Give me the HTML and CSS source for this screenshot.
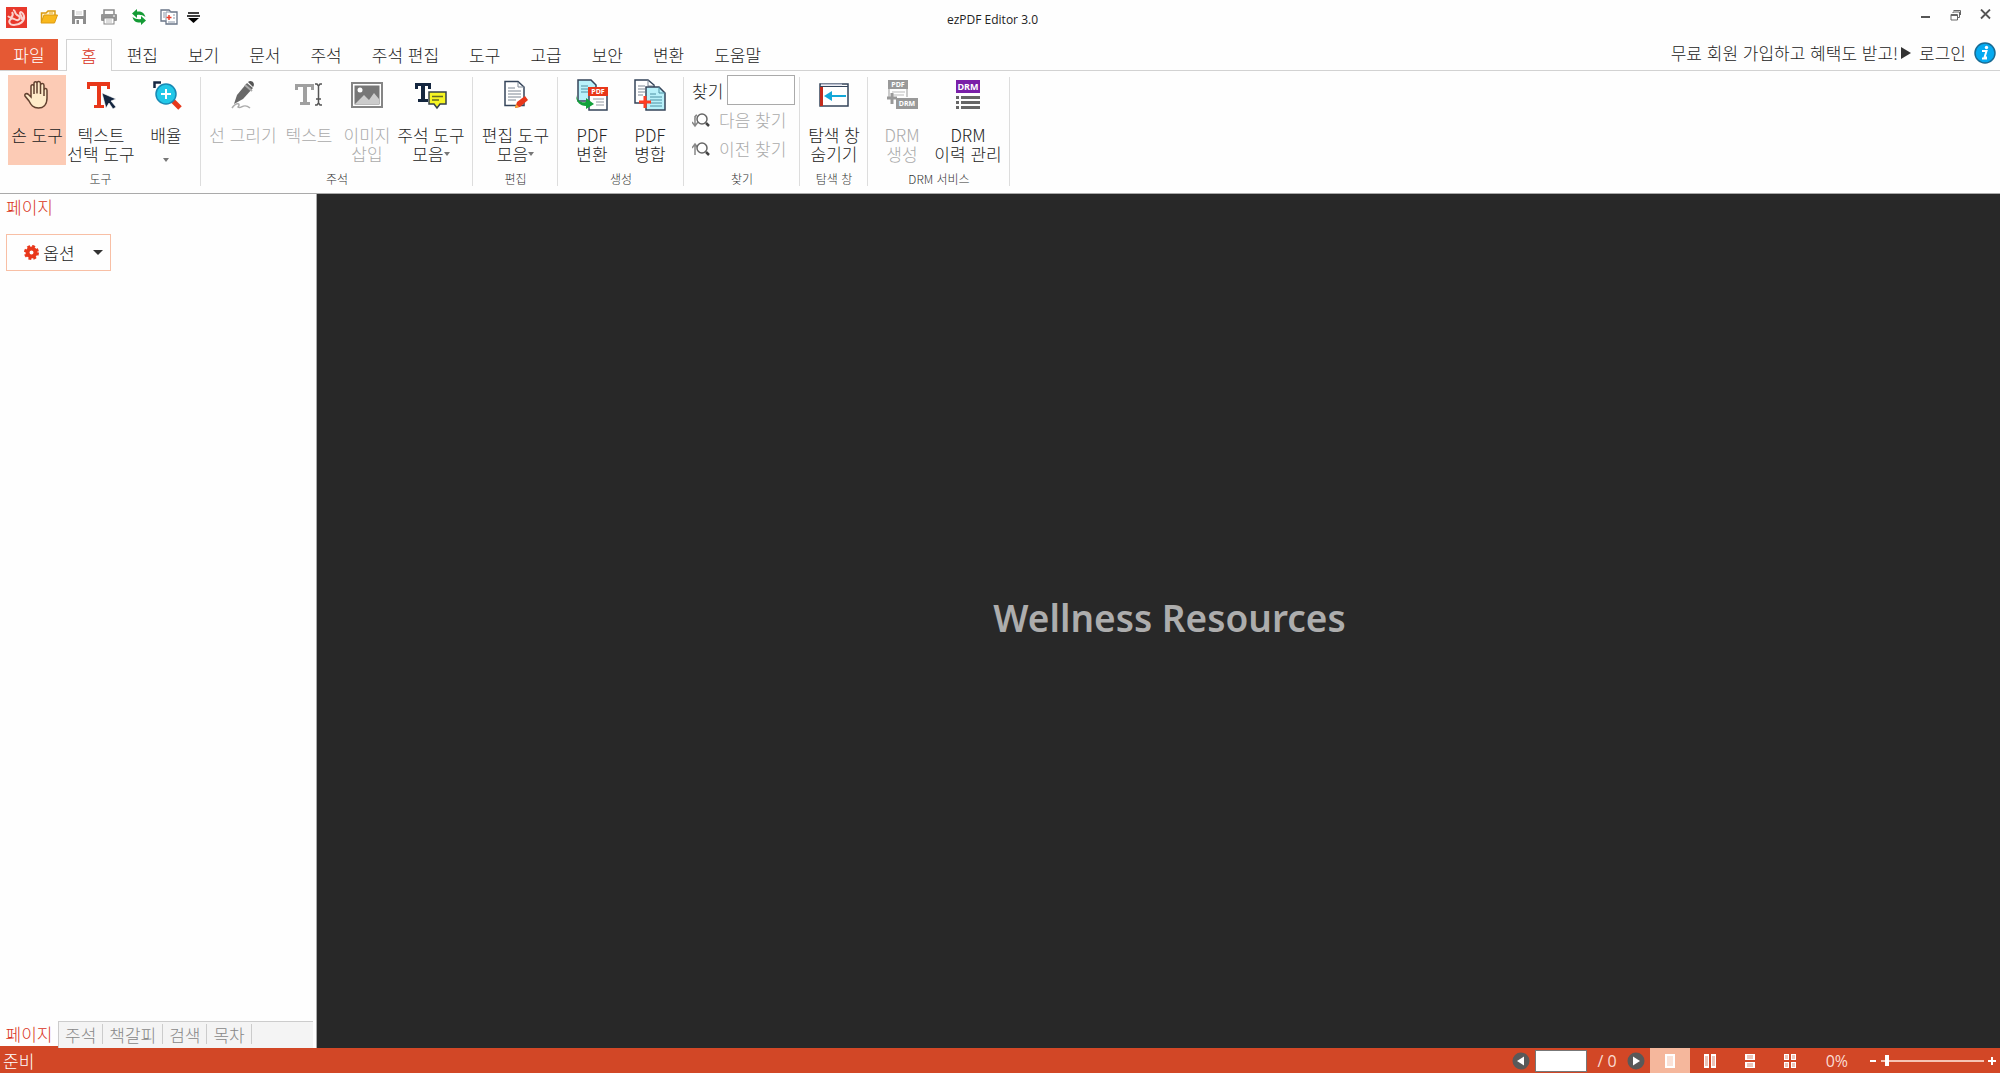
FILE: index.html
```html
<!DOCTYPE html>
<html lang="ko">
<head>
<meta charset="utf-8">
<title>ezPDF Editor 3.0</title>
<link rel="stylesheet" href="styles.css">
</head>
<body>
<div class="app">
  <header class="titlebar">
    <div class="quick">
      <svg class="logo" width="21" height="21" viewBox="0 0 21 21"><rect width="21" height="21" fill="#e8382b"/><path d="M7 3C10 3 8 6 11 8C14 9 15 12 12 13C9 14 8 10 5 12C2 14 3 18 8 18C14 18 19 14 18 9C17 5 14 4 14 6C14 9 17 9 16 13M2 9C5 13 8 8 6 5" fill="none" stroke="#fbd3cf" stroke-width="2"/></svg>
      <button aria-label="열기"><svg width="18" height="16" viewBox="0 0 18 16"><path d="M1.500 13V4H6L8 2H15V6" fill="#fff3cf" stroke="#d99a12" stroke-width="1.500"/><path d="M1 14L4 6H17.500L14.500 14Z" fill="#f9b81d" stroke="#dc9a10"/><path d="M9 4H13" stroke="#e6a51c"/></svg></button>
      <button aria-label="저장"><svg width="16" height="16" viewBox="0 0 16 16"><path d="M1 1H15V15H1Z" fill="#8d8d8d"/><path d="M3.500 1H12.500V7H3.500ZM4 10H12V15H4Z" fill="#fff"/><path d="M5 3H11M5 5H11" stroke="#ccc"/><path d="M5.500 11H8V15H5.500Z" fill="#8d8d8d"/></svg></button>
      <button aria-label="인쇄"><svg width="18" height="16" viewBox="0 0 18 16"><path d="M4 5V1H14V5" fill="#fff" stroke="#8a8a8a" stroke-width="1.500"/><rect x="1" y="5" width="16" height="7" rx="1" fill="#969696"/><rect x="4" y="9" width="10" height="6" fill="#fff" stroke="#858585"/><path d="M6 11H12M6 13H12" stroke="#bbb"/><path d="M13 7H15" stroke="#fff"/></svg></button>
      <button aria-label="새로 고침"><svg width="16" height="16" viewBox="0 0 16 16"><path d="M1 4.500L6 0V2.500C10 2 13 3 14.500 8C11.500 6 9 5.500 6 6V9Z" fill="#149b35"/><path d="M15 11.500L10 16V13.500C6 14 3 13 1.500 8C4.500 10 7 10.500 10 10V7Z" fill="#149b35"/></svg></button>
      <button aria-label="병합"><svg width="18" height="16" viewBox="0 0 18 16"><path d="M1 1H9L11 3H17V15H6V12H1Z" fill="#fff" stroke="#687487" stroke-width="1.300"/><path d="M6 12V3H11M3 4H5M3 6H5M3 8H5M13 6H15M13 9H15M8 13H15" fill="none" stroke="#8b97a8"/><path d="M9 6V11M6.500 8.500H11.500" stroke="#e9402e" stroke-width="1.500"/></svg></button>
      <button class="more" aria-label="빠른 실행 사용자 지정"><svg width="13" height="11" viewBox="0 0 13 11"><path d="M1 1H12M0 4H13" stroke="#000" stroke-width="1.500"/><path d="M1 6H12L6.500 11Z"/></svg></button>
    </div>
    <div class="title">ezPDF Editor 3.0</div>
    <div class="window-buttons">
      <button aria-label="최소화"><svg width="11" height="12" viewBox="0 0 11 12"><path d="M1 8H10" stroke="#555" stroke-width="2"/></svg></button>
      <button aria-label="이전 크기로"><svg width="11" height="12" viewBox="0 0 11 12"><path d="M1 5.500H7.500V11H1ZM1 6.500H7.500M3 4V3H9.500V8.500H8M3.500 1.500H10.500V6" fill="none" stroke="#666"/></svg></button>
      <button aria-label="닫기"><svg width="11" height="12" viewBox="0 0 11 12"><path d="M1 0.500L10 9.500M10 0.500L1 9.500" stroke="#555" stroke-width="1.800"/></svg></button>
    </div>
  </header>

  <nav class="tabs">
    <button class="file">파일</button>
    <button class="active">홈</button>
    <button>편집</button><button>보기</button><button>문서</button><button>주석</button><button>주석 편집</button><button>도구</button><button>고급</button><button>보안</button><button>변환</button><button>도움말</button>
    <div class="account">
      <a href="#">무료 회원 가입하고 혜택도 받고!<svg width="11" height="12" viewBox="0 0 11 12"><path d="M1 0L11 6L1 12Z" fill="#333"/></svg></a>
      <a href="#">로그인</a>
      <button aria-label="정보"><svg width="22" height="22" viewBox="0 0 22 22"><circle cx="11" cy="11" r="10" fill="#05aaf0" stroke="#176b94" stroke-width="1.500"/><circle cx="12.500" cy="5.500" r="1.700" fill="#fff"/><path d="M8 9H12.500L10.500 15.500H13M8 16.500H13" fill="none" stroke="#fff" stroke-width="2"/></svg></button>
    </div>
  </nav>

  <div class="ribbon">
    <section class="group tools">
      <div class="items">
        <button class="tool w58 on"><svg width="32" height="32" viewBox="0 0 32 32"><path d="M10 18V7.500C10 5 13 5 13 7.500V15V4.500C13 2 16 2 16 4.500V14.500V4C16 2 19.500 2 19.500 4.500V15V6C20 4 23 4 23 6.500V17V11C23.500 9 26 9 26 11.500V19C26 26 22 29 17.500 29C12 29 10 26 8 22L4 17C3 14.500 6 14 7.500 15.500Z" fill="#ffebc9" stroke="#62402f" stroke-width="1.500"/></svg><span>손 도구</span></button>
        <button class="tool w70"><svg width="32" height="32" viewBox="0 0 32 32"><path d="M2 3H25V10H22V7H16V26H19V29H9V26H12V7H5V10H2Z" fill="#e8371a"/><path d="M17 14L31 20L26 22L31 28L28 30L24 24L21 29Z" fill="#14263f" stroke="#fff" stroke-width=".6"/></svg><span>텍스트<br>선택 도구</span></button>
        <button class="tool w60"><svg width="32" height="32" viewBox="0 0 32 32"><path d="M4.500 9V3.500H11" fill="none" stroke="#162842" stroke-width="2.500"/><path d="M23 22L30 29" stroke="#e6381c" stroke-width="5"/><circle cx="16" cy="15" r="10" fill="#20c8e8" stroke="#1789b4" stroke-width="1.500"/><path d="M16 10V20M11 15H21" stroke="#fff" stroke-width="2"/></svg><span>배율</span><i class="caret"></i></button>
      </div>
      <h2>도구</h2>
    </section>
    <section class="group notes">
      <div class="items">
        <button class="tool w68" disabled><svg width="32" height="32" viewBox="0 0 32 32"><path d="M7 25L10 16L20 4L26 9L16 20Z" fill="#686868"/><path d="M18 6L25 12" stroke="#aaa" stroke-width="2"/><path d="M21 3C24 0 29 4 26 8Z" fill="#555"/><path d="M5 29C10 22 14 25 11 28C14 31 16 23 23 29" fill="none" stroke="#aaa" stroke-width="1.500"/></svg><span>선 그리기</span></button>
        <button class="tool w64" disabled><svg width="32" height="32" viewBox="0 0 32 32"><path d="M2 5H21V11H18V8H14V23H17V26H7V23H10V8H5V11H2Z" fill="#a0a0a0"/><path d="M22 5H24L25.500 7L27 5H29M25.500 7V24M22 26H24L25.500 24L27 26H29M23 20H28" fill="none" stroke="#555" stroke-width="1.500"/></svg><span>텍스트</span></button>
        <button class="tool w52" disabled><svg width="32" height="32" viewBox="0 0 32 32"><rect x="1" y="4" width="30" height="24" fill="#fff" stroke="#858585" stroke-width="2"/><rect x="3.500" y="6.500" width="25" height="19" fill="#777"/><circle cx="9" cy="11" r="2.500" fill="#fff"/><path d="M4 25L13 16L18 21L23 14L28 20V25Z" fill="#ccc"/></svg><span>이미지<br>삽입</span></button>
        <button class="tool w76"><svg width="32" height="32" viewBox="0 0 32 32"><path d="M0 4H16V10H13V7H10V20H13V23H3V20H6V7H3V10H0Z" fill="#14263f"/><path d="M14 13H31V25H25L22 29L19 25H14Z" fill="#f6f523" stroke="#34404a" stroke-width="1.500"/><path d="M17 17.500H28M17 21H24" stroke="#666b22" stroke-width="1.500"/></svg><span>주석 도구<br>모음<i class="caret"></i></span></button>
      </div>
      <h2>주석</h2>
    </section>
    <section class="group edit">
      <div class="items">
        <button class="tool w76"><svg width="32" height="32" viewBox="0 0 32 32"><path d="M5 2.500H18L24 8V26.500H5Z" fill="#fff" stroke="#34445a" stroke-width="1.500"/><path d="M18 3V8H24M8 9H15M8 12H21M8 15H21M8 18H21M8 21H16" fill="none" stroke="#7d8794"/><path d="M15 29L17 23L25 17L28 21L20 28Z" fill="#e8371a"/><path d="M15 29L16 25L19 28Z" fill="#f6ac36"/></svg><span>편집 도구<br>모음<i class="caret"></i></span></button>
      </div>
      <h2>편집</h2>
    </section>
    <section class="group create">
      <div class="items">
        <button class="tool w58"><svg width="32" height="32" viewBox="0 0 32 32"><path d="M2 1H15L20 6V22H2Z" fill="#b9f1fa" stroke="#34445a" stroke-width="1.500"/><path d="M5 7H12M5 10H12M5 13H12" stroke="#4f91a4"/><path d="M13 17V31H31V16" fill="#fff" stroke="#34445a" stroke-width="1.500"/><path d="M17 20H28M20 23H28M20 26H28" stroke="#9299a2"/><rect x="12" y="8" width="20" height="9" fill="#e8371a"/><text x="22" y="15" class="icon-text">PDF</text><path d="M0 16C1 22 5 24 10 23V19L18 25L10 30V27C4 27 0 23 0 16Z" fill="#12a13b"/></svg><span>PDF<br>변환</span></button>
        <button class="tool w58"><svg width="32" height="32" viewBox="0 0 32 32"><path d="M1 1H14L20 6V24H1Z" fill="#fff" stroke="#34445a" stroke-width="1.500"/><path d="M14 1V7H20M4 7H11M4 10H11M4 13H11M4 16H9" fill="none" stroke="#7d8794"/><path d="M12 8H25L31 14V31H12Z" fill="#b9f1fa" stroke="#34445a" stroke-width="1.500"/><path d="M25 8V14H31M16 15H22M16 18H28M16 21H28M16 24H28M16 27H28" fill="none" stroke="#4f91a4"/><path d="M11 17V29M5 23H17" stroke="#ff3d23" stroke-width="3"/></svg><span>PDF<br>병합</span></button>
      </div>
      <h2>생성</h2>
    </section>
    <section class="group find">
      <div class="items">
        <label class="find-row"><span>찾기</span><input type="text"></label>
        <button class="find-btn" disabled><svg width="18" height="16" viewBox="0 0 18 16"><path d="M3 4V14M0 10L3 14L6 10M5 3C2 4 3 7 3 9" fill="none" stroke="#888" stroke-width="1.500"/><circle cx="10" cy="7" r="5" fill="#fff" stroke="#666" stroke-width="1.500"/><path d="M14 11L17 14" stroke="#444" stroke-width="2.500"/></svg>다음 찾기</button>
        <button class="find-btn" disabled><svg width="18" height="16" viewBox="0 0 18 16"><path d="M3 14V3M0 7L3 3L6 7" fill="none" stroke="#888" stroke-width="1.500"/><circle cx="10" cy="7" r="5" fill="#fff" stroke="#666" stroke-width="1.500"/><path d="M14 11L17 14" stroke="#444" stroke-width="2.500"/></svg>이전 찾기</button>
      </div>
      <h2>찾기</h2>
    </section>
    <section class="group nav">
      <div class="items">
        <button class="tool w58"><svg width="32" height="32" viewBox="0 0 32 32"><rect x="2" y="5" width="28" height="22" fill="#fff" stroke="#34445a" stroke-width="1.500"/><path d="M2 7.500H30" stroke="#34445a"/><path d="M3 5.500H24" stroke="#b9bfd0" stroke-width="1.500"/><rect x="2" y="8" width="3" height="19" fill="#c32a1c"/><path d="M11 17H28" stroke="#12a7d8" stroke-width="2"/><path d="M6 17L14 12V22Z" fill="#12a7d8"/></svg><span>탐색 창<br>숨기기</span></button>
      </div>
      <h2>탐색 창</h2>
    </section>
    <section class="group drm">
      <div class="items">
        <button class="tool w66" disabled><svg width="32" height="32" viewBox="0 0 32 32"><path d="M3 9V18M21 9V18" stroke="#999"/><path d="M6 13H19M6 16H18" stroke="#bbb"/><rect x="2" y="1" width="20" height="9" fill="#999"/><text x="12" y="8" class="icon-text">PDF</text><path d="M6 14V25M1 19H11" stroke="#999" stroke-width="3"/><rect x="10" y="19" width="22" height="11" fill="#999"/><text x="21" y="27" class="icon-text">DRM</text></svg><span>DRM<br>생성</span></button>
        <button class="tool w66"><svg width="32" height="32" viewBox="0 0 32 32"><rect x="4" y="1" width="24" height="13" fill="#7a1fa8"/><text x="16" y="11" class="icon-text big">DRM</text><path d="M4 18.500H7M9 18.500H28M4 23.500H7M9 23.500H28M4 28.500H7M9 28.500H28" stroke="#666" stroke-width="3"/></svg><span>DRM<br>이력 관리</span></button>
      </div>
      <h2>DRM 서비스</h2>
    </section>
  </div>

  <div class="workspace">
    <aside class="sidebar">
      <h1>페이지</h1>
      <button class="options"><svg width="15" height="15" viewBox="0 0 15 15"><circle cx="7.500" cy="7.500" r="6" fill="none" stroke="#e8371a" stroke-width="3" stroke-dasharray="2.700 2"/><circle cx="7.500" cy="7.500" r="4" fill="none" stroke="#e8371a" stroke-width="4"/></svg>옵션<i class="caret"></i></button>
      <div class="panel-tabs">
        <button class="current">페이지</button>
        <div class="others"><button>주석</button><button>책갈피</button><button>검색</button><button>목차</button></div>
      </div>
    </aside>
    <main class="canvas"><p>Wellness Resources</p></main>
  </div>

  <footer class="status">
    <span class="ready">준비</span>
    <button aria-label="이전 페이지"><svg width="18" height="18" viewBox="0 0 18 18"><circle cx="9" cy="9" r="8.500" fill="#595959"/><path d="M12 4.500V13.500L5 9Z" fill="#fff"/></svg></button>
    <input class="page" type="text" aria-label="페이지 번호">
    <span class="total">/ 0</span>
    <button aria-label="다음 페이지"><svg width="18" height="18" viewBox="0 0 18 18"><circle cx="9" cy="9" r="8.500" fill="#595959"/><path d="M6 4.500V13.500L13 9Z" fill="#fff"/></svg></button>
    <div class="views">
      <button class="on" aria-label="한 페이지"><svg width="12" height="14" viewBox="0 0 12 14"><path d="M1 0H11V14H1Z" fill="#fff"/><path d="M3 3H9M3 5H9M3 7H9M3 9H9M3 11H9" stroke="#f5c5b0"/></svg></button>
      <button aria-label="두 페이지"><svg width="12" height="14" viewBox="0 0 12 14"><path d="M0 0H5V14H0ZM7 0H12V14H7Z" fill="#fff"/><path d="M1 3H4M1 5H4M1 7H4M1 9H4M1 11H4M8 3H11M8 5H11M8 7H11M8 9H11M8 11H11" stroke="#d98870"/></svg></button>
      <button aria-label="연속"><svg width="12" height="14" viewBox="0 0 12 14"><path d="M1 0H11V6H1ZM1 8H11V14H1Z" fill="#fff"/><path d="M3 2H9M3 4H9M3 10H9M3 12H9" stroke="#d98870"/></svg></button>
      <button aria-label="연속 두 페이지"><svg width="12" height="14" viewBox="0 0 12 14"><path d="M0 0H5V6H0ZM7 0H12V6H7ZM0 8H5V14H0ZM7 8H12V14H7Z" fill="#fff"/><path d="M1 2H4M1 4H4M8 2H11M8 4H11M1 10H4M1 12H4M8 10H11M8 12H11" stroke="#d98870"/></svg></button>
    </div>
    <span class="percent">0%</span>
    <button aria-label="축소"><svg width="8" height="8" viewBox="0 0 8 8"><path d="M1 4H7" stroke="#fff" stroke-width="2"/></svg></button>
    <input class="zoom" type="range" min="0" max="100" value="4" aria-label="배율">
    <button aria-label="확대"><svg width="8" height="8" viewBox="0 0 8 8"><path d="M0 4H8M4 0V8" stroke="#fff" stroke-width="2"/></svg></button>
  </footer>
</div>
</body>
</html>
```
FILE: styles.css
```css
* { box-sizing: border-box; }
body {
  margin: 0;
  font: 300 17px/19px "Noto Sans CJK KR", "Noto Sans", sans-serif;
  color: #222;
  background: #fefefe;
}
button {
  display: flex;
  align-items: center;
  justify-content: center;
  margin: 0;
  padding: 0;
  border: 0;
  background: none;
  color: inherit;
  font: inherit;
  white-space: nowrap;
}
input { margin: 0; padding: 0 4px; font: inherit; }
svg { display: block; flex: none; }
h1, h2, p { margin: 0; font-weight: inherit; }
a { color: inherit; text-decoration: none; }

.app { display: flex; flex-direction: column; min-height: 100vh; }

/* Title bar */
.titlebar {
  display: grid;
  grid-template-columns: 1fr auto 1fr;
  height: 38px;
  padding: 0 9px 0 6px;
}
.quick { display: flex; align-items: center; gap: 13px; height: 34px; }
.more { margin-left: -4px; }
.title { padding-top: 1px; font: 400 12px/38px "Open Sans", sans-serif; margin-right: 12px; }
.window-buttons { display: flex; justify-content: flex-end; align-items: center; gap: 19px; height: 30px; }

/* Ribbon tabs */
.tabs { display: flex; align-items: stretch; height: 33px; border-bottom: 1px solid #d2d2d2; }
.tabs > button { padding: 0 15px; margin-top: 1px; }
.tabs > .file { width: 58px; margin-right: 8px; background: #e55934; color: #fff; }
.tabs > .active {
  border: 1px solid #d2d2d2;
  border-bottom: 0;
  margin-bottom: -1px;
  padding: 0 14px;
  background: #fefefe;
  color: #d9341b;
}
.account { display: flex; align-items: center; gap: 8px; margin-left: auto; padding: 0 4px 3px 0; }
.account a { display: flex; align-items: center; gap: 2px; }

/* Ribbon */
.ribbon { display: flex; height: 123px; padding-top: 4px; border-bottom: 1px solid #aaa; }
.group { position: relative; display: flex; flex-direction: column; flex: none; }
.group::after { content: ""; position: absolute; right: 0; top: 2px; width: 1px; height: 109px; background: #ddd; }
.items { display: flex; height: 90px; }
.group h2 { font-size: 12px; line-height: 28px; text-align: center; color: #333; }
.tools { width: 201px; }
.tools .items, .notes .items { padding-left: 8px; }
.notes { width: 272px; }
.edit { width: 85px; }
.edit .items, .nav .items { justify-content: center; }
.create { width: 126px; }
.create .items { padding-left: 5px; }
.find { width: 116px; }
.find .items { flex-direction: column; padding: 0 5px 0 8px; }
.nav { width: 68px; }
.drm { width: 142px; }
.drm .items { padding-left: 1px; }
.tool { flex-direction: column; justify-content: flex-start; gap: 14px; padding-top: 4px; }
.tool.on { background: #fccbb5; }
.tool:disabled, .find-btn:disabled { color: #aaa; }
.w52 { width: 52px; } .w58 { width: 58px; } .w60 { width: 60px; } .w64 { width: 64px; }
.w66 { width: 66px; } .w68 { width: 68px; } .w70 { width: 70px; } .w76 { width: 76px; }
.caret {
  display: inline-block;
  border: 3px solid transparent;
  border-top: 4px solid #777;
  border-bottom: 0;
  vertical-align: 5px;
}
.icon-text { font: 700 7px "Open Sans", sans-serif; fill: #fff; text-anchor: middle; }
.icon-text.big { font-size: 9px; }
.find-row { display: flex; align-items: center; justify-content: space-between; height: 30px; }
.find-row input { width: 68px; height: 30px; border: 1px solid #aaa; background: #fff; }
.find-btn { justify-content: flex-start; gap: 9px; height: 29px; }

/* Work area */
.workspace { display: flex; flex: 1; }
.sidebar { display: flex; flex-direction: column; width: 317px; border-right: 1px solid #aaa; }
.sidebar h1 { padding: 3px 6px; font-size: 17px; color: #d9341b; }
.options {
  width: 105px;
  height: 37px;
  margin: 15px 0 0 6px;
  padding: 0 0 1px 10px;
  gap: 4px;
  border: 1px solid #f8bfa5;
}
.options .caret { margin-left: 14px; border-width: 5px 5px 0; border-top-color: #333; vertical-align: 0; }
.panel-tabs { display: flex; height: 27px; margin-top: auto; padding-right: 3px; }
.panel-tabs .current { width: 58px; color: #d9341b; border-bottom: 2px solid #d24726; }
.others { display: flex; flex: 1; align-items: center; padding-bottom: 2px; border: 1px solid #ccc; border-width: 1px 0 0 1px; background: #f4f4f4; color: #888; }
.others button { height: 20px; padding: 0 6px; border-right: 1px solid #ccc; }
.canvas { display: flex; flex: 1; align-items: center; justify-content: center; padding: 0 0 6px 22px; background: #282828; }
.canvas p { font: 600 37px/48px "Noto Sans", sans-serif; color: #adadad; }

/* Status bar */
.status { display: flex; align-items: center; height: 25px; padding: 0 4px 0 3px; background: #d24726; color: #fff; }
.ready { margin-right: auto; }
.page { width: 52px; height: 22px; margin: 0 10px 0 5px; border: 1px solid #777; background: #fff; }
.total, .percent { font: 400 16px/24px "Open Sans", sans-serif; color: #fbdcd2; }
.total { margin-right: 10px; }
.views { display: flex; height: 25px; margin: 0 16px 0 5px; }
.views button { width: 40px; }
.views .on { background: #f5b79c; }
.percent { margin-right: 21px; }
.zoom { appearance: none; width: 103px; height: 20px; margin: 0 4px; padding: 0; background: none; }
.zoom::-webkit-slider-runnable-track { height: 2px; background: #f6c3b3; }
.zoom::-webkit-slider-thumb { appearance: none; width: 4px; height: 11px; margin-top: -5px; background: #fff; }
```
